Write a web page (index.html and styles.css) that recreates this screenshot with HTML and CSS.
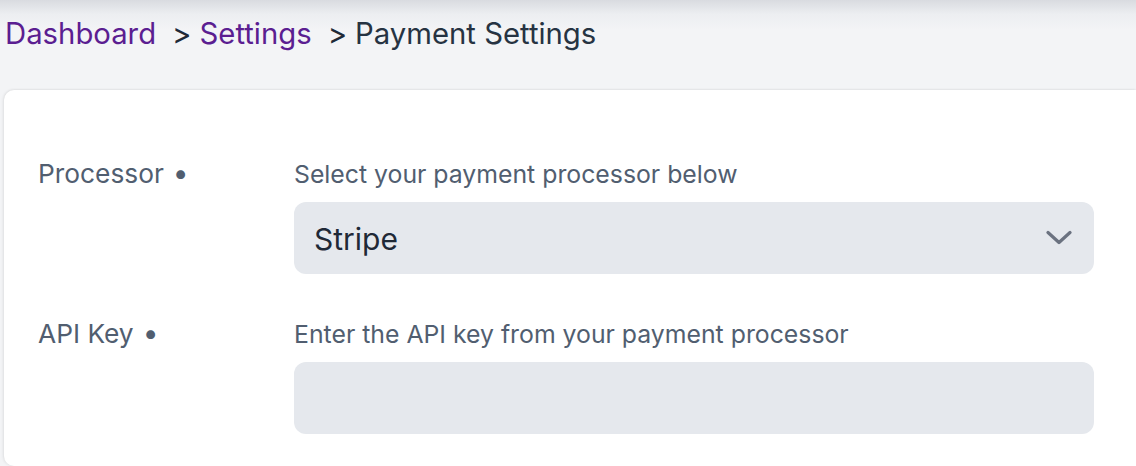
FILE: index.html
```html
<!DOCTYPE html>
<html>
<head>
<meta charset="utf-8">
<link rel="stylesheet" href="styles.css">
</head>
<body>
<div class="page">
  <nav class="crumbs">
    <a class="crumb-link">Dashboard</a>
    <span class="sep">&gt;</span>
    <a class="crumb-link">Settings</a>
    <span class="sep">&gt;</span>
    <span class="crumb-current">Payment Settings</span>
  </nav>
  <section class="card">
    <div class="row">
      <div class="label">Processor<span class="dot">•</span></div>
      <div class="field">
        <div class="help">Select your payment processor below</div>
        <div class="select">
          <span class="select-value">Stripe</span>
          <svg class="chevron" width="26" height="16" viewBox="0 0 26 16"><path d="M2 2.5 L13 12.5 L24 2.5" fill="none" stroke="#6b7280" stroke-width="3.2" stroke-linecap="round" stroke-linejoin="round"/></svg>
        </div>
      </div>
    </div>
    <div class="row">
      <div class="label">API Key<span class="dot">•</span></div>
      <div class="field">
        <div class="help">Enter the API key from your payment processor</div>
        <div class="input"></div>
      </div>
    </div>
  </section>
</div>
</body>
</html>
```
FILE: styles.css
```css
* { box-sizing: border-box; }
html, body { margin: 0; padding: 0; }
body {
  width: 1136px;
  height: 466px;
  overflow: hidden;
  font-family: Inter, "Noto Sans", sans-serif;
  background: linear-gradient(to bottom, #d9dbe0 0px, #eceef1 14px, #f3f4f6 30px, #f3f4f6 100%);
}
.page { padding: 14px 0 0 4px; }
.crumbs {
  display: flex;
  align-items: baseline;
  font-size: 29.3px;
  line-height: 40px;
  height: 76px;
  padding-left: 1px;
}
.crumb-link { color: #5b1e91; }
.sep { color: #1f2937; margin: 0 8px 0 16px; }
.crumb-current { color: #263342; }
.card {
  background: #ffffff;
  border-radius: 10px 0 0 10px;
  box-shadow: -1px 0 3px rgba(0,0,0,0.08), 0 -1px 2px rgba(0,0,0,0.04);
  padding: 68px 42px 0 34px;
  height: 376px;
}
.row { display: flex; margin-bottom: 44px; }
.label {
  width: 256px;
  flex: none;
  font-size: 26.3px;
  line-height: 24px;
  color: #515e70;
  margin-top: 3px;
}
.dot { font-size: 28px; margin-left: 9px; }
.field { width: 800px; }
.help {
  font-size: 24.8px;
  line-height: 24px;
  color: #515e70;
  margin-top: 4px;
  margin-bottom: 16px;
}
.select, .input {
  height: 72px;
  border-radius: 12px;
  background: #e5e8ed;
}
.select {
  display: flex;
  align-items: center;
  justify-content: space-between;
  padding: 0 22px 0 20px;
}
.select-value { font-size: 30px; color: #1f2937; margin-top: 2px; }
.chevron { display: block; }
```
